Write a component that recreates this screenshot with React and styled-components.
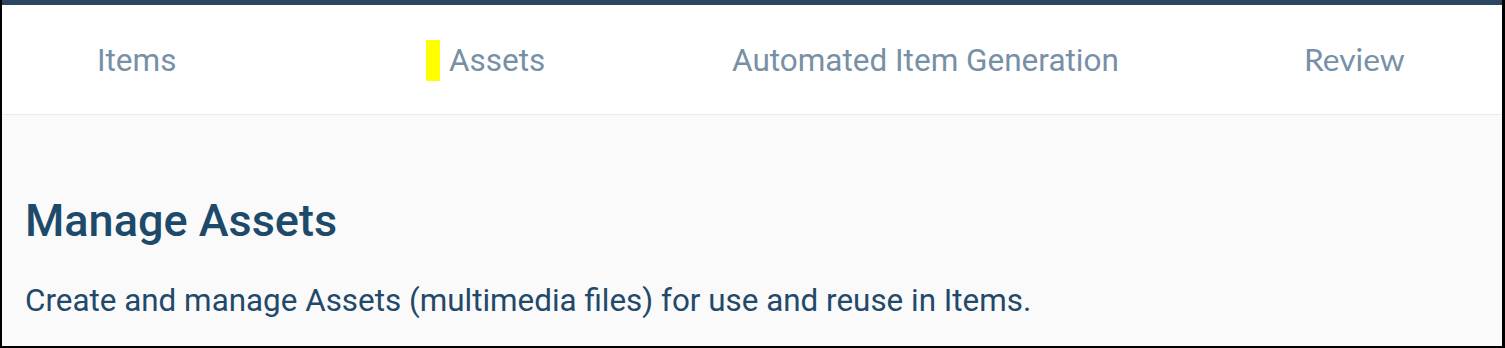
import React from "react";
import styled, { createGlobalStyle } from "styled-components";

const GlobalStyle = createGlobalStyle`
  html, body {
    margin: 0;
    padding: 0;
    background: #000;
  }
  * {
    box-sizing: border-box;
  }
`;

const tabs = [
  { label: "Items", width: 329 },
  { label: "Assets", width: 306, active: true },
  { label: "Automated Item Generation", width: 572 },
  { label: "Review", lato: true },
];

function App() {
  return (
    <>
      <GlobalStyle />
      <Frame>
        <TopBar />
        <Nav>
          {tabs.map((t) => (
            <Tab key={t.label} $width={t.width}>
              {t.active && <Marker />}
              <TabLabel $lato={t.lato}>{t.label}</TabLabel>
            </Tab>
          ))}
        </Nav>
        <Content>
          <Title>Manage Assets</Title>
          <Description>
            Create and manage Assets (multimedia files) for use and reuse in Items.
          </Description>
        </Content>
      </Frame>
    </>
  );
}

export default App;

const Frame = styled.div`
  width: 1505px;
  height: 348px;
  display: flex;
  flex-direction: column;
  border-left: 2px solid #000;
  border-right: 3px solid #000;
  border-bottom: 2px solid #000;
  background: #fafafa;
  overflow: hidden;
`;

const TopBar = styled.div`
  height: 5px;
  background-color: #2c4662;
  flex-shrink: 0;
`;

const Nav = styled.nav`
  height: 110px;
  flex-shrink: 0;
  display: flex;
  align-items: center;
  padding: 2px 0 0 95px;
  background: #fff;
  border-bottom: 1px solid #ececec;
`;

const Tab = styled.div`
  display: flex;
  align-items: center;
  gap: 9px;
  width: ${(p) => (p.$width ? `${p.$width}px` : "auto")};
  flex-shrink: 0;
`;

const Marker = styled.span`
  width: 14px;
  height: 41px;
  background: #ffff00;
`;

const TabLabel = styled.span`
  font-family: ${(p) => (p.$lato ? "Lato" : "Roboto")}, "Liberation Sans", sans-serif;
  font-size: ${(p) => (p.$lato ? "31.7px" : "31.5px")};
  line-height: 40px;
  margin-top: ${(p) => (p.$lato ? "-3px" : "0")};
  color: #7890a6;
`;

const Content = styled.main`
  flex: 1;
  padding: 78px 23px 0;
`;

const Title = styled.h1`
  margin: 0;
  font-family: Roboto, "Liberation Sans", sans-serif;
  font-weight: 500;
  font-size: 45px;
  line-height: 56px;
  color: #1d4a6b;
`;

const Description = styled.p`
  margin: 32px 0 0;
  font-family: Roboto, "Liberation Sans", sans-serif;
  font-size: 31.4px;
  line-height: 40px;
  color: #23496a;
`;
